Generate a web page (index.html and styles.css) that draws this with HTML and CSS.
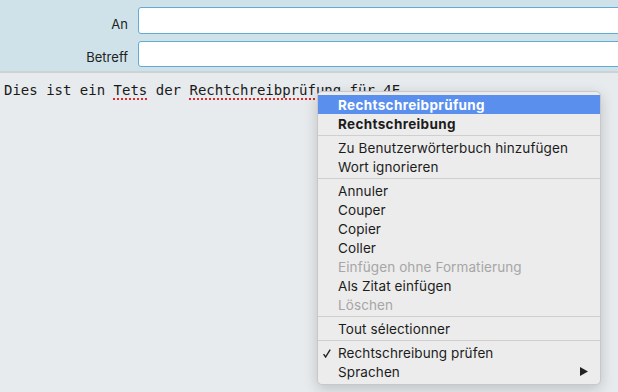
FILE: index.html
```html
<!DOCTYPE html>
<html lang="de">
<head>
<meta charset="UTF-8" />
<meta name="viewport" content="width=device-width, initial-scale=1.0"/>
<title>Nachricht verfassen</title>
<link rel="stylesheet" href="styles.css">
</head>
<body>

<div class="compose-header">
    <label class="field-label" for="to">An</label>
    <input class="field-input field-to" id="to" type="text">
    <label class="field-label" for="subject">Betreff</label>
    <input class="field-input" id="subject" type="text">
</div>

<div class="compose-body">
    Dies ist ein <span class="misspelled">Tets</span> der <span class="misspelled">Rechtchreibprüfung</span> für 4E
</div>

<!-- Context menu -->
<div class="context-menu">
    <div class="menu-item bold active">Rechtschreibprüfung</div>
    <div class="menu-item bold">Rechtschreibung</div>
    <div class="menu-sep"></div>
    <div class="menu-item">Zu Benutzerwörterbuch hinzufügen</div>
    <div class="menu-item">Wort ignorieren</div>
    <div class="menu-sep"></div>
    <div class="menu-item">Annuler</div>
    <div class="menu-item">Couper</div>
    <div class="menu-item">Copier</div>
    <div class="menu-item">Coller</div>
    <div class="menu-item disabled">Einfügen ohne Formatierung</div>
    <div class="menu-item">Als Zitat einfügen</div>
    <div class="menu-item disabled">Löschen</div>
    <div class="menu-sep"></div>
    <div class="menu-item">Tout sélectionner</div>
    <div class="menu-sep"></div>
    <div class="menu-item checked">
        <svg class="check" width="8" height="9" viewBox="0 0 8 9"><polyline points="0.6,5.2 2.6,8 7.2,0.6" fill="none" stroke="#222" stroke-width="1.4"/></svg>
        Rechtschreibung prüfen
    </div>
    <div class="menu-item has-sub">
        Sprachen
        <svg class="arrow" width="8" height="9" viewBox="0 0 8 9"><polygon points="0,0 8,4.5 0,9" fill="#222"/></svg>
    </div>
</div>

</body>
</html>
```

FILE: styles.css
```css
body {
    margin: 0;
    font-family: Inter, "Noto Sans", sans-serif;
    background: #e7ebee;
    color: #1e1e1e;
    overflow: hidden;
}

.compose-header {
    display: grid;
    grid-template-columns: 128px 1fr;
    column-gap: 10px;
    row-gap: 7px;
    align-items: center;
    padding: 7px 0 4px;
    background: #cfe2e9;
    border-bottom: 2px solid #cdd2d5;
    overflow: hidden;
}

.field-label {
    text-align: right;
    font-size: 13px;
    padding-top: 6px;
    color: #222;
}

.field-input {
    box-sizing: border-box;
    height: 26px;
    width: calc(100% + 6px);
    border: 1px solid #62abd4;
    border-radius: 3px;
    background: #fff;
    outline: none;
}

.field-to {
    height: 27px;
}

.compose-body {
    padding: 9px 4px 8px;
    font-family: "DejaVu Sans Mono", monospace;
    font-size: 14px;
    line-height: 17px;
    color: #1a1a1a;
}

.misspelled {
    text-decoration: underline dotted #e0262b;
    text-decoration-thickness: 1.5px;
    text-underline-offset: 3px;
}

/* Context menu */
.context-menu {
    position: absolute;
    left: 317px;
    top: 91px;
    width: 282px;
    padding: 3px 0;
    background: #ececec;
    border: 1px solid #c8c8c8;
    border-radius: 5px;
    box-shadow: 0 4px 14px rgba(0,0,0,0.18);
    font-size: 13.5px;
    letter-spacing: 0.1px;
}

.menu-item {
    position: relative;
    height: 19px;
    line-height: 20px;
    padding-left: 20px;
    color: #1c1c1c;
    white-space: nowrap;
}

.menu-item.bold {
    font-weight: 700;
    letter-spacing: 0.35px;
}

.menu-item.active {
    background: #5a8fee;
    color: #fff;
}

.menu-item.disabled {
    color: #a6a6a6;
}

.menu-sep {
    height: 1px;
    margin: 2px 0;
    background: #cfcfcf;
}

.check {
    position: absolute;
    left: 5px;
    top: 6px;
}

.arrow {
    position: absolute;
    right: 12px;
    top: 5px;
}
```
